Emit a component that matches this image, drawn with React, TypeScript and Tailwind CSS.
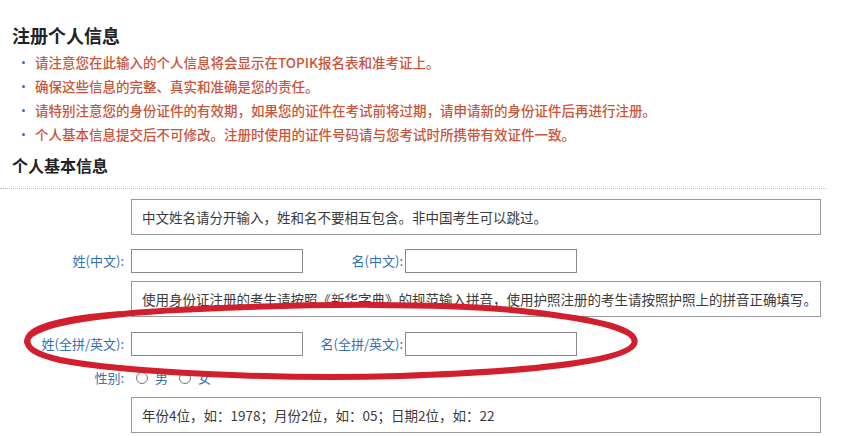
const notes = [
  "请注意您在此输入的个人信息将会显示在TOPIK报名表和准考证上。",
  "确保这些信息的完整、真实和准确是您的责任。",
  "请特别注意您的身份证件的有效期，如果您的证件在考试前将过期，请申请新的身份证件后再进行注册。",
  "个人基本信息提交后不可修改。注册时使用的证件号码请与您考试时所携带有效证件一致。",
];

function HintBox({ text }: { text: string }) {
  return (
    <div className="ml-[131px] w-[690px] h-[36px] border border-[#9a9a9a] flex items-center pl-[10px] text-[13.5px] text-[#3a3a3a]">
      {text}
    </div>
  );
}

function NameRow({ first, last }: { first: string; last: string }) {
  return (
    <div className="flex items-center h-[24px]">
      <div className="w-[124px] text-right text-[13px] text-[#3471b0]">{first}</div>
      <input className="ml-[7px] w-[172px] h-[24px] border border-[#8a8a8a] bg-white outline-none" />
      <div className="w-[100px] text-right text-[13px] text-[#3471b0]">{last}</div>
      <input className="ml-[2px] w-[172px] h-[24px] border border-[#8a8a8a] bg-white outline-none" />
    </div>
  );
}

export default function App() {
  return (
    <div
      className="relative w-[860px] h-[436px] overflow-hidden bg-white"
      style={{ fontFamily: '"Noto Sans CJK SC", "Noto Sans", sans-serif' }}
    >
      <div className="pt-[24px] px-[12px]">
        <h2 className="text-[18px] leading-[22px] font-bold text-[#222]">注册个人信息</h2>
        <ul className="mt-[4px] pl-[10px]">
          {notes.map((n) => (
            <li key={n} className="flex items-center h-[24px] text-[13.5px] font-medium text-[#c9553a]">
              <span className="w-[3px] h-[3px] rounded-full bg-[#3d6ea6] mr-[10px]" />
              {n}
            </li>
          ))}
        </ul>
        <h3 className="mt-[8px] text-[16px] leading-[22px] font-bold text-[#222]">个人基本信息</h3>
      </div>
      <div className="mt-[12px] w-[826px] border-t border-dotted border-[#b8b8b8]" />

      <div className="mt-[10px]">
        <HintBox text="中文姓名请分开输入，姓和名不要相互包含。非中国考生可以跳过。" />
        <div className="mt-[14px]">
          <NameRow first="姓(中文):" last="名(中文):" />
        </div>
        <div className="mt-[8px]">
          <HintBox text="使用身份证注册的考生请按照《新华字典》的规范输入拼音，使用护照注册的考生请按照护照上的拼音正确填写。" />
        </div>
        <div className="mt-[15px]">
          <NameRow first="姓(全拼/英文):" last="名(全拼/英文):" />
        </div>
        <div className="mt-[12px] flex items-center h-[20px] text-[13px] text-[#3471b0]">
          <div className="w-[124px] text-right">性别:</div>
          <label className="ml-[12px] flex items-center">
            <span className="w-[12px] h-[12px] rounded-full border border-[#777]" />
            <span className="ml-[7px]">男</span>
          </label>
          <label className="ml-[11px] flex items-center">
            <span className="w-[12px] h-[12px] rounded-full border border-[#777]" />
            <span className="ml-[7px]">女</span>
          </label>
        </div>
        <div className="mt-[9px]">
          <HintBox text="年份4位，如：1978；月份2位，如：05；日期2位，如：22" />
        </div>
      </div>

      <svg className="absolute inset-0 pointer-events-none" width="860" height="436">
        <path
          d="M 27 342 C 25 322, 120 312, 200 309 C 300 304, 450 302, 530 312 C 600 320, 640 330, 634 344 C 625 362, 520 372, 400 376 C 280 380, 120 372, 60 360 C 35 354, 25 348, 28 338 C 32 326, 70 318, 120 314"
          fill="none"
          stroke="#d21f2e"
          strokeWidth="6"
          strokeLinecap="round"
        />
      </svg>
    </div>
  );
}
